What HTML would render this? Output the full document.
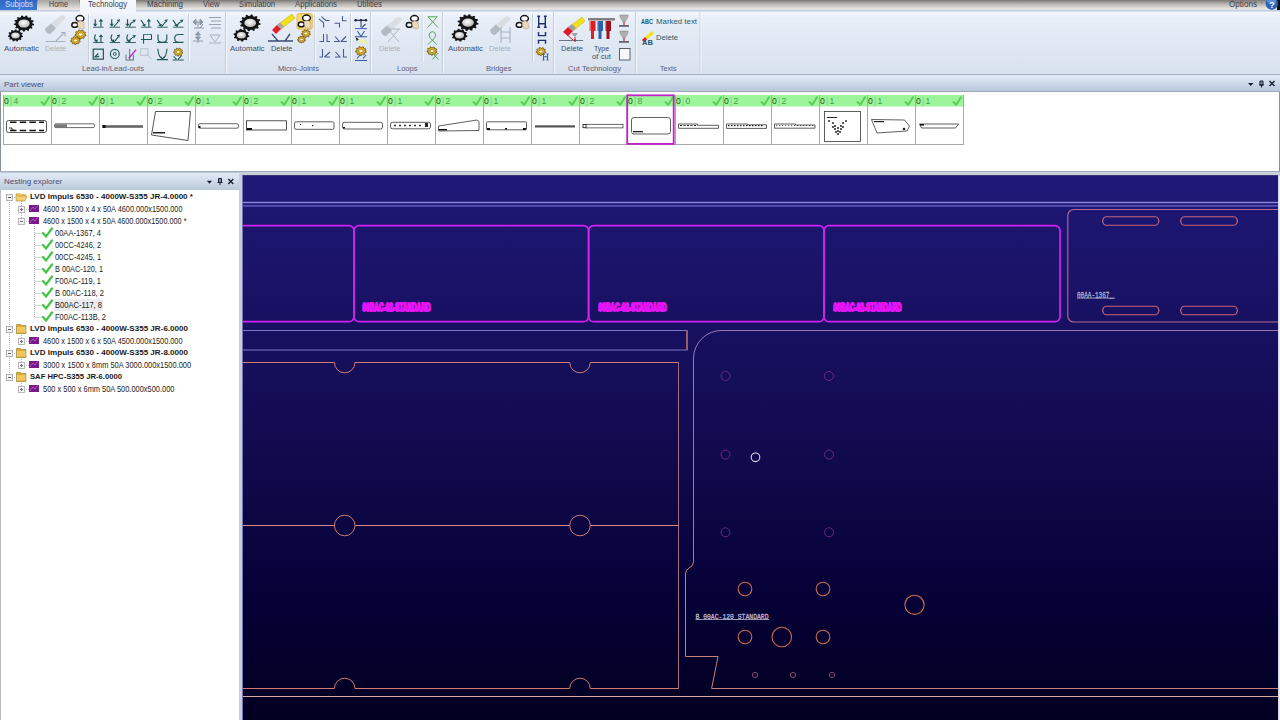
<!DOCTYPE html>
<html><head><meta charset="utf-8">
<style>
*{margin:0;padding:0;box-sizing:border-box}
html,body{width:1280px;height:720px;overflow:hidden;background:#c6d0dc;font-family:"Liberation Sans",sans-serif;position:relative}
.a{position:absolute}
#tabs{left:0;top:0;width:1280px;height:10px;background:linear-gradient(#7a7876,#b9b5b2 40%,#e8e6e4 90%,#dfe3ea)}
.tab{position:absolute;top:0.5px;font-size:8.2px;line-height:8px;color:#3a404c;white-space:nowrap;transform-origin:0 0}
#ribbon{left:0;top:10px;width:1280px;height:64px;background:linear-gradient(#c2cce0,#c2cce0 1px,#f2f6fc 2px,#e9eff9 8px,#e0e8f3 50%,#d8e2ee)}
#rline{left:0;top:74px;width:1280px;height:1px;background:#a4aec6}
#pvh{left:0;top:75px;width:1280px;height:17px;background:linear-gradient(#e2eaf8,#dce6f4 15%,#b6c6da)}
#pvhl{left:0;top:91px;width:1280px;height:1px;background:#9ea8b6}
#pv{left:0;top:92px;width:1280px;height:80px;background:#fff;border-left:1px solid #8a9098;border-right:1px solid #8a9098;border-bottom:1px solid #a2aab6}
#nvh{left:0;top:171px;width:239px;height:19px;background:linear-gradient(#a6aebb,#a6aebb 5%,#dfe8f6 12%,#d6e0ee 40%,#b9c9dc)}
#nv{left:0;top:190px;width:239px;height:530px;background:#fff;border-left:1px solid #bcbcbc}
#canvas{left:243px;top:176px;width:1035px;height:544px;background:linear-gradient(#1f1877,#110a4d 51%,#050136 78%,#020021)}
.gl{position:absolute;font-size:7px;color:#5a5870;white-space:nowrap}
.rt{position:absolute;transform-origin:0 0;line-height:10px;font-size:8px;color:#3c4a60;white-space:nowrap}
.rtd{color:#a8b0bc}
.sep{position:absolute;top:14px;width:1px;height:58px;background:#c4ccd8}
.tr{position:absolute;transform-origin:0 0;white-space:nowrap;color:#1c1c1c;line-height:12px;font-size:8px}
.tb{font-weight:bold;color:#1a1a1a}
.tn{font-size:8.8px}
.cl{position:absolute;top:95.5px;font-size:8.6px;line-height:10px;color:#4aa04a;white-space:nowrap}
.cl b{font-weight:normal;color:#205020}
.cl i{font-style:normal;color:#80c880;margin:0 1.2px}
</style></head><body>
<div id="tabs" class="a">
  <div class="a" style="left:0;top:0;width:37px;height:10px;background:linear-gradient(#2f66c4,#3c78d4)"></div>
  <div class="a" style="left:38px;top:0;width:41px;height:10px;background:linear-gradient(#a8a4a0,#ece8e4)"></div>
  <div class="a" style="left:80px;top:0;width:56px;height:11px;background:linear-gradient(#f6f8fb,#eef3fa)"></div>
  <div class="tab" style="left:5px;color:#d6e6ff;transform:scaleX(0.946)">Subjobs</div>
  <div class="tab" style="left:49px;transform:scaleX(0.870)">Home</div>
  <div class="tab" style="left:88px;transform:scaleX(0.942)">Technology</div>
  <div class="tab" style="left:147px;transform:scaleX(0.964)">Machining</div>
  <div class="tab" style="left:203px;transform:scaleX(0.937)">View</div>
  <div class="tab" style="left:239px;transform:scaleX(0.942)">Simulation</div>
  <div class="tab" style="left:295px;transform:scaleX(0.951)">Applications</div>
  <div class="tab" style="left:357px;transform:scaleX(0.947)">Utilities</div>
  <div class="tab" style="left:1229px;transform:scaleX(0.992)">Options</div>
</div>
<div id="ribbon" class="a"></div>
<div class="a" style="left:80px;top:9px;width:56px;height:3px;background:#f2f6fc"></div>
<svg class="a" style="left:1258px;top:0" width="22" height="12" viewBox="1258 0 22 12"><rect x="1277" y="0" width="3" height="10" fill="#101010"/><circle cx="1271.8" cy="3.5" r="6.2" fill="#2a64b8"/><ellipse cx="1271.5" cy="1" rx="4.5" ry="3" fill="#6a9ee0" opacity="0.7"/><text x="1269.2" y="7.5" font-family="Liberation Sans" font-weight="bold" font-size="9" fill="#fff">?</text><path d="M1260 2.5 h3 l-1.5 1.8z" fill="#8a8a8a"/></svg>
<!--RIBBON-->
<svg class="a" style="left:0;top:0" width="720" height="76" viewBox="0 0 720 76"><defs><radialGradient id="gg" cx="0.45" cy="0.4" r="0.6"><stop offset="0" stop-color="#ffffff"/><stop offset="1" stop-color="#b8b8b8"/></radialGradient></defs><polygon points="32.57,23.50 34.17,24.09 33.96,25.26 32.21,25.46 31.59,26.69 32.66,27.81 31.80,28.76 30.13,28.29 28.87,29.14 29.17,30.53 27.85,31.06 26.65,30.02 25.03,30.30 24.49,31.65 23.02,31.62 22.56,30.26 20.96,29.91 19.70,30.90 18.41,30.33 18.80,28.95 17.59,28.05 15.90,28.45 15.09,27.47 16.23,26.39 15.68,25.14 13.95,24.87 13.80,23.70 15.44,23.17 15.68,21.86 14.30,20.98 14.86,19.88 16.61,20.03 17.59,18.95 16.88,17.66 18.00,16.90 19.48,17.68 20.96,17.09 21.08,15.68 22.53,15.43 23.38,16.66 25.03,16.70 25.96,15.49 27.39,15.80 27.42,17.22 28.87,17.86 30.39,17.14 31.47,17.94 30.68,19.21 31.59,20.31 33.35,20.24 33.84,21.36 32.41,22.18" fill="#151515"/><ellipse cx="24" cy="23.5" rx="5.71" ry="4.08" fill="url(#gg)"/><polygon points="21.88,35.50 23.07,36.02 22.85,37.05 21.51,37.22 20.87,38.26 21.52,39.21 20.64,39.98 19.40,39.54 18.15,40.15 18.05,41.23 16.80,41.49 16.05,40.59 14.59,40.56 13.78,41.42 12.54,41.10 12.52,40.02 11.32,39.36 10.05,39.74 9.23,38.93 9.94,38.01 9.37,36.94 8.05,36.71 7.90,35.67 9.13,35.21 9.37,34.06 8.42,33.29 8.99,32.36 10.34,32.50 11.32,31.64 11.03,30.58 12.15,30.04 13.18,30.74 14.59,30.44 15.07,29.43 16.37,29.46 16.77,30.49 18.15,30.85 19.24,30.21 20.31,30.79 19.95,31.84 20.87,32.74 22.22,32.66 22.73,33.62 21.72,34.34" fill="#151515"/><ellipse cx="15.5" cy="35.5" rx="4.26" ry="3.04" fill="url(#gg)"/><path d="M45 29 L60 16 Q64 14 66 18 L50 34 Q46 34 45 29 Z" fill="#dadee3"/><path d="M45 29 L51 23.5 L56 28.5 L50 34 Q46 34 45 29 Z" fill="#b4bac2"/><path d="M45.5 41.5 h19.5 M56 41 l8.5 -8.5 M61 32.5 h4 v4" stroke="#a8b0bc" stroke-width="1.1" fill="none"/><ellipse cx="80" cy="18.6" rx="3.9" ry="3" fill="#fff" stroke="#151515" stroke-width="1.5"/><ellipse cx="74.8" cy="24.9" rx="3" ry="2.4" fill="#fff" stroke="#151515" stroke-width="1.5"/><path d="M77.5 21.8 q3.5 -1.5 6 0.2 l0.8 6 q-2.5 1.5 -5 0.5 l-1.5 -3 z" fill="#eed8bc" stroke="#9a8068" stroke-width="0.4"/><polygon points="84.79,34.50 85.97,34.99 85.67,36.10 84.36,36.10 83.79,36.84 84.32,37.86 83.25,38.55 82.24,37.83 81.24,38.09 80.88,39.16 79.54,39.10 79.32,38.01 78.36,37.66 77.27,38.28 76.29,37.51 76.94,36.54 76.47,35.75 75.16,35.63 75.00,34.50 76.23,34.12 76.47,33.25 75.56,32.45 76.29,31.49 77.52,31.88 78.36,31.34 78.26,30.23 79.54,29.90 80.20,30.86 81.24,30.91 82.02,30.01 83.25,30.45 83.02,31.55 83.79,32.16 85.06,31.89 85.67,32.90 84.66,33.62" fill="#e0b020" stroke="#5a4008" stroke-width="0.7"/><ellipse cx="80.5" cy="34.5" rx="2.20" ry="1.76" fill="#fff8c8" stroke="#806010" stroke-width="0.5"/><polygon points="79.24,40.50 80.27,40.93 80.01,41.90 78.87,41.90 78.37,42.55 78.83,43.43 77.90,44.03 77.02,43.41 76.15,43.63 75.83,44.57 74.67,44.52 74.47,43.56 73.63,43.26 72.68,43.80 71.82,43.12 72.40,42.28 71.98,41.59 70.84,41.49 70.70,40.50 71.78,40.17 71.98,39.41 71.19,38.71 71.82,37.88 72.90,38.21 73.63,37.74 73.55,36.77 74.67,36.48 75.24,37.33 76.15,37.37 76.82,36.58 77.90,36.97 77.70,37.93 78.37,38.45 79.48,38.22 80.01,39.10 79.13,39.73" fill="#e0b020" stroke="#5a4008" stroke-width="0.7"/><ellipse cx="75.5" cy="40.5" rx="1.92" ry="1.54" fill="#fff8c8" stroke="#806010" stroke-width="0.5"/><line x1="88.5" y1="14" x2="88.5" y2="62" stroke="#c6ced9" stroke-width="1"/><line x1="89.5" y1="14" x2="89.5" y2="62" stroke="#f6f9fd" stroke-width="1"/><g transform="translate(98.3 23) scale(0.88 0.76) translate(-98.3 -23)"><path d="M92.3 28.5 h12" stroke="#1f5858" stroke-width="1.2"/><path d="M94.8 18 v9" stroke="#1f5858" stroke-width="1.35"/><path d="M92.3 24 l2.5 3.5 l2.5 -3.5z" fill="#1f5858"/><path d="M101.3 28 v-8" stroke="#1f5858" stroke-width="1.35"/><path d="M98.8 21 l2.5 -3.5 l2.5 3.5z" fill="#1f5858"/></g><g transform="translate(114.8 23) scale(0.88 0.76) translate(-114.8 -23)"><path d="M108.8 28.5 h12" stroke="#1f5858" stroke-width="1.2"/><path d="M111.3 18 v9" stroke="#1f5858" stroke-width="1.35"/><path d="M108.8 24 l2.5 3.5 l2.5 -3.5z" fill="#1f5858"/><path d="M113.8 28 l5 -7" stroke="#1f5858" stroke-width="1.3"/><path d="M116.8 19 l4 -1 l-1 4z" fill="#1f5858"/></g><g transform="translate(130.6 23) scale(0.88 0.76) translate(-130.6 -23)"><path d="M124.6 28.5 h12" stroke="#1f5858" stroke-width="1.2"/><path d="M127.1 18 v9" stroke="#1f5858" stroke-width="1.35"/><path d="M124.6 24 l2.5 3.5 l2.5 -3.5z" fill="#1f5858"/><path d="M129.6 28 q0 -5 5 -7" stroke="#1f5858" stroke-width="1.3" fill="none"/><path d="M132.6 19 l4 -0.5 l-1.5 4z" fill="#1f5858"/></g><g transform="translate(146.2 23) scale(0.88 0.76) translate(-146.2 -23)"><path d="M140.2 28.5 h12" stroke="#1f5858" stroke-width="1.2"/><path d="M140.2 19 l4 7" stroke="#1f5858" stroke-width="1.35"/><path d="M141.2 26 l4 2 l0.5 -4z" fill="#1f5858"/><path d="M149.2 28 v-8" stroke="#1f5858" stroke-width="1.35"/><path d="M146.7 21 l2.5 -3.5 l2.5 3.5z" fill="#1f5858"/></g><g transform="translate(162.4 23) scale(0.88 0.76) translate(-162.4 -23)"><path d="M156.4 28.5 h12" stroke="#1f5858" stroke-width="1.2"/><path d="M156.4 19 l4 7" stroke="#1f5858" stroke-width="1.35"/><path d="M157.4 26 l4 2 l0.5 -4z" fill="#1f5858"/><path d="M161.4 28 l5 -7" stroke="#1f5858" stroke-width="1.3"/><path d="M164.4 19 l4 -1 l-1 4z" fill="#1f5858"/></g><g transform="translate(178.2 23) scale(0.88 0.76) translate(-178.2 -23)"><path d="M172.2 28.5 h12" stroke="#1f5858" stroke-width="1.2"/><path d="M172.2 19 l4 7" stroke="#1f5858" stroke-width="1.35"/><path d="M173.2 26 l4 2 l0.5 -4z" fill="#1f5858"/><path d="M177.2 28 q0 -5 5 -7" stroke="#1f5858" stroke-width="1.3" fill="none"/><path d="M180.2 19 l4 -0.5 l-1.5 4z" fill="#1f5858"/></g><g transform="translate(98.3 38.4) scale(0.88 0.76) translate(-98.3 -38.4)"><path d="M92.3 43.9 h12" stroke="#1f5858" stroke-width="1.2"/><path d="M95.3 33.4 q-3 5 1 9" stroke="#1f5858" stroke-width="1.35" fill="none"/><path d="M93.3 41.4 l4 2 l0.5 -4z" fill="#1f5858"/><path d="M101.3 43.4 v-8" stroke="#1f5858" stroke-width="1.35"/><path d="M98.8 36.4 l2.5 -3.5 l2.5 3.5z" fill="#1f5858"/></g><g transform="translate(114.8 38.4) scale(0.88 0.76) translate(-114.8 -38.4)"><path d="M108.8 43.9 h12" stroke="#1f5858" stroke-width="1.2"/><path d="M111.8 33.4 q-3 5 1 9" stroke="#1f5858" stroke-width="1.35" fill="none"/><path d="M109.8 41.4 l4 2 l0.5 -4z" fill="#1f5858"/><path d="M113.8 43.4 l5 -7" stroke="#1f5858" stroke-width="1.3"/><path d="M116.8 34.4 l4 -1 l-1 4z" fill="#1f5858"/></g><g transform="translate(130.6 38.4) scale(0.88 0.76) translate(-130.6 -38.4)"><path d="M124.6 43.9 h12" stroke="#1f5858" stroke-width="1.2"/><path d="M127.6 33.4 q-3 5 1 9" stroke="#1f5858" stroke-width="1.35" fill="none"/><path d="M125.6 41.4 l4 2 l0.5 -4z" fill="#1f5858"/><path d="M129.6 43.4 q0 -5 5 -7" stroke="#1f5858" stroke-width="1.3" fill="none"/><path d="M132.6 34.4 l4 -0.5 l-1.5 4z" fill="#1f5858"/></g><g transform="translate(146.2 38.4) scale(0.88 0.76) translate(-146.2 -38.4)"><path d="M140.2 39.9 h12 M143.2 45.4 V33.4 H152.2 V39.9" stroke="#1f5858" stroke-width="1.2" fill="none"/></g><g transform="translate(162.4 38.4) scale(0.88 0.76) translate(-162.4 -38.4)"><path d="M157.4 33.4 v5 q0 5 5 5 q5 0 5 -5 v-5 M156.4 43.9 h12" stroke="#1f5858" stroke-width="1.3" fill="none"/></g><g transform="translate(178.2 38.4) scale(0.88 0.76) translate(-178.2 -38.4)"><path d="M184.2 33.4 h-5 q-5 0 -5 5 q0 5 5 5 h5 M172.2 43.9 h12" stroke="#1f5858" stroke-width="1.3" fill="none"/></g><g transform="translate(98.3 54.4) scale(0.92 0.95) translate(-98.3 -54.4)"><rect x="92.8" y="48.9" width="11" height="10.5" fill="none" stroke="#1f5858" stroke-width="1.3"/><path d="M94.3 57.4 l4 -4 M94.3 57.4 l5 -1" stroke="#1f5858" stroke-width="1.3"/></g><g transform="translate(114.8 54.4) scale(0.92 0.95) translate(-114.8 -54.4)"><circle cx="114.8" cy="53.9" r="4.8" fill="none" stroke="#1f5858" stroke-width="1.2"/><circle cx="114.8" cy="53.9" r="1.6" fill="none" stroke="#1f5858" stroke-width="1"/></g><g transform="translate(130.6 54.4) scale(0.92 0.95) translate(-130.6 -54.4)"><path d="M125.6 54.4 v6 h8 v-6 M129.6 48.4 v12" stroke="#5a7a80" stroke-width="1.1" fill="none"/><path d="M128.6 58.4 l8 -9" stroke="#c020d0" stroke-width="1.4"/></g><g transform="translate(146.2 54.4) scale(0.92 0.95) translate(-146.2 -54.4)"><rect x="140.2" y="48.4" width="8" height="7" fill="none" stroke="#b8c0c8" stroke-width="1"/><path d="M147.2 54.4 l5 5" stroke="#b8c0c8" stroke-width="1"/></g><g transform="translate(162.4 54.4) scale(0.92 0.95) translate(-162.4 -54.4)"><path d="M157.4 48.4 q1 10 5 10 q4 0 5 -10 M156.4 59.9 h12" stroke="#1f5858" stroke-width="1.2" fill="none"/><path d="M160.4 56.4 l2 3 l2 -3" stroke="#1f5858" stroke-width="1" fill="none"/></g><g transform="translate(178.2 54.4) scale(0.92 0.95) translate(-178.2 -54.4)"><polygon points="182.10,51.90 183.17,52.34 182.90,53.35 181.71,53.35 181.19,54.03 181.67,54.96 180.70,55.58 179.79,54.93 178.88,55.16 178.55,56.14 177.33,56.09 177.13,55.09 176.25,54.77 175.26,55.34 174.37,54.63 174.97,53.75 174.54,53.03 173.35,52.93 173.20,51.90 174.32,51.55 174.54,50.77 173.71,50.04 174.37,49.17 175.49,49.52 176.25,49.03 176.17,48.02 177.33,47.71 177.93,48.59 178.88,48.64 179.58,47.81 180.70,48.22 180.49,49.22 181.19,49.77 182.35,49.52 182.90,50.45 181.98,51.10" fill="#e0b020" stroke="#5a4008" stroke-width="0.7"/><ellipse cx="178.2" cy="51.9" rx="2.00" ry="1.60" fill="#fff8c8" stroke="#806010" stroke-width="0.5"/><path d="M173.2 56.4 l3 3 M178.2 59.4 l4 -4 M172.2 60.4 h12" stroke="#1f5858" stroke-width="1.1"/></g><line x1="188.5" y1="14" x2="188.5" y2="62" stroke="#c6ced9" stroke-width="1"/><line x1="189.5" y1="14" x2="189.5" y2="62" stroke="#f6f9fd" stroke-width="1"/><path d="M193 22 l3 -3 v6 z M203 22 l-3 -3 v6 z M196 22 h4 M198 22 v6 M194 28 h10 M200 28 l3 -4" stroke="#8a98a8" fill="#8a98a8" stroke-width="1"/><path d="M209 17.5 h12 M211 21 h10 M209 24.5 h12 M211 28 h10" stroke="#98a4b0" stroke-width="1.1"/><path d="M198 31 v12 M195.5 35 l2.5 -3 l2.5 3z M195.5 37 l2.5 3 l2.5 -3z M193 41 h10" stroke="#8a98a8" fill="#8a98a8" stroke-width="0.9"/><path d="M209 43 h12 M210 35 l5 7 l5 -7 h-10" stroke="#a8b2bc" stroke-width="1" fill="none"/><line x1="225.5" y1="12" x2="225.5" y2="73" stroke="#c4ccd8" stroke-width="1"/><line x1="226.5" y1="12" x2="226.5" y2="73" stroke="#f4f7fb" stroke-width="1"/><polygon points="259.02,22.90 260.67,23.56 260.41,24.86 258.59,25.08 257.84,26.43 258.85,27.66 257.82,28.68 256.10,28.14 254.61,29.01 254.72,30.48 253.18,30.95 252.03,29.80 250.20,29.96 249.38,31.27 247.75,31.07 247.47,29.61 245.79,29.01 244.25,29.82 242.97,28.99 243.65,27.62 242.56,26.43 240.72,26.52 240.13,25.29 241.57,24.37 241.38,22.90 239.73,22.24 239.99,20.94 241.81,20.72 242.56,19.37 241.55,18.14 242.58,17.12 244.30,17.66 245.79,16.79 245.68,15.32 247.22,14.85 248.37,16.00 250.20,15.84 251.02,14.53 252.65,14.73 252.93,16.19 254.61,16.79 256.15,15.98 257.43,16.81 256.75,18.18 257.84,19.37 259.68,19.28 260.27,20.51 258.83,21.43" fill="#151515"/><ellipse cx="250.2" cy="22.9" rx="5.88" ry="4.20" fill="url(#gg)"/><polygon points="248.12,35.20 249.36,35.80 249.08,36.99 247.65,37.18 246.84,38.36 247.40,39.43 246.30,40.26 245.00,39.74 243.48,40.31 243.15,41.45 241.65,41.60 240.98,40.57 239.32,40.31 238.22,41.07 236.90,40.49 237.12,39.34 235.96,38.36 234.51,38.46 233.87,37.37 234.89,36.54 234.68,35.20 233.44,34.60 233.72,33.41 235.15,33.22 235.96,32.04 235.40,30.97 236.50,30.14 237.80,30.66 239.32,30.09 239.65,28.95 241.15,28.80 241.82,29.83 243.48,30.09 244.58,29.33 245.90,29.91 245.68,31.06 246.84,32.04 248.29,31.94 248.93,33.03 247.91,33.86" fill="#151515"/><ellipse cx="241.4" cy="35.2" rx="4.48" ry="3.20" fill="url(#gg)"/><path d="M276 26 L292 14 L295 18 L280 30 Z" fill="#f2e21c" stroke="#c8b010" stroke-width="0.6"/><path d="M272 30 L277 25 L281 29 L276 34 Z" fill="#e02030"/><path d="M277 25 L280 22.5 L284 26.5 L281 29Z" fill="#a8a8a8"/><path d="M268 41 h15 M278 41 l-6 -7 M283 41 h10 M285 41 l5 -7" stroke="#3a4a78" stroke-width="1.3" fill="none"/><rect x="297" y="13.5" width="15.3" height="15.8" rx="2" fill="#f8d870" stroke="#e0b040" stroke-width="0.8"/><ellipse cx="306.5" cy="18.1" rx="3.9" ry="3" fill="#fff" stroke="#151515" stroke-width="1.5"/><ellipse cx="301.3" cy="24.4" rx="3" ry="2.4" fill="#fff" stroke="#151515" stroke-width="1.5"/><path d="M304.0 21.3 q3.5 -1.5 6 0.2 l0.8 6 q-2.5 1.5 -5 0.5 l-1.5 -3 z" fill="#eed8bc" stroke="#9a8068" stroke-width="0.4"/><polygon points="309.51,33.50 310.48,33.90 310.23,34.81 309.15,34.81 308.69,35.42 309.13,36.25 308.25,36.81 307.43,36.23 306.61,36.44 306.31,37.32 305.22,37.27 305.03,36.37 304.25,36.08 303.35,36.59 302.55,35.96 303.09,35.17 302.70,34.52 301.63,34.43 301.50,33.50 302.51,33.19 302.70,32.48 301.96,31.82 302.55,31.04 303.56,31.35 304.25,30.92 304.17,30.01 305.22,29.73 305.76,30.52 306.61,30.56 307.24,29.82 308.25,30.19 308.06,31.09 308.69,31.58 309.73,31.36 310.23,32.19 309.41,32.78" fill="#e0b020" stroke="#5a4008" stroke-width="0.7"/><ellipse cx="306" cy="33.5" rx="1.80" ry="1.44" fill="#fff8c8" stroke="#806010" stroke-width="0.5"/><polygon points="304.62,39.50 305.48,39.86 305.26,40.66 304.30,40.66 303.89,41.20 304.28,41.95 303.50,42.44 302.77,41.92 302.04,42.11 301.78,42.89 300.81,42.85 300.64,42.05 299.94,41.80 299.15,42.25 298.44,41.69 298.91,40.98 298.57,40.41 297.62,40.32 297.50,39.50 298.40,39.22 298.57,38.59 297.90,38.01 298.44,37.31 299.33,37.59 299.94,37.20 299.87,36.39 300.81,36.15 301.28,36.85 302.04,36.89 302.60,36.23 303.50,36.56 303.33,37.35 303.89,37.80 304.82,37.60 305.26,38.34 304.53,38.86" fill="#e0b020" stroke="#5a4008" stroke-width="0.7"/><ellipse cx="301.5" cy="39.5" rx="1.60" ry="1.28" fill="#fff8c8" stroke="#806010" stroke-width="0.5"/><line x1="314.7" y1="14" x2="314.7" y2="62" stroke="#c6ced9" stroke-width="1"/><line x1="315.7" y1="14" x2="315.7" y2="62" stroke="#f6f9fd" stroke-width="1"/><g stroke="#4a5a98" stroke-width="1.1" fill="none"><path d="M318.9 18.9 L323.6 22.8 V27.5 M321.4 16.7 L325.7 20.5 H329.7"/><path d="M342.5 16 V20.7 H346.5 M334.5 23.3 H339.5 V27.5"/><path d="M319.5 41.5 H323.5 V34 M327 34 V41.5 H330"/><path d="M334 41.5 H339.5 L335 36.5 M341 41.5 L346 36.5 M341 41.5 H347"/><path d="M319.5 57 H322.5 V49 M324.5 57 L330 52 M324.5 57 H330"/><path d="M335.5 52 L340 57 H335 M343.5 49 V57 H347"/></g><line x1="350.5" y1="14" x2="350.5" y2="62" stroke="#c6ced9" stroke-width="1"/><line x1="351.5" y1="14" x2="351.5" y2="62" stroke="#f6f9fd" stroke-width="1"/><path d="M355 20.3 H366.5" stroke="#1a2038" stroke-width="1.2"/><circle cx="355.6" cy="20.3" r="1.2" fill="#1a2038"/><circle cx="361" cy="20.3" r="1.2" fill="#1a2038"/><circle cx="366" cy="20.3" r="1.2" fill="#1a2038"/><path d="M361 20.3 V27.5 M362 27.5 L365.5 24" stroke="#3a4a80" stroke-width="1.1" fill="none"/><path d="M355 28.6 H367" stroke="#4a6ab8" stroke-width="1.1"/><path d="M357.5 31 L361 36.5 L364.5 31 M355 36.8 H367" stroke="#3a5aa8" stroke-width="1.1" fill="none"/><path d="M355.5 37 l3.5 2.5 l-1.5 0.5 l-0.5 1.5z" fill="#101010"/><rect x="358.5" y="39.5" width="9" height="4" fill="#e8f0a0" opacity="0.7"/><polygon points="365.13,51.00 366.27,51.47 365.98,52.54 364.72,52.54 364.17,53.26 364.68,54.24 363.65,54.90 362.68,54.21 361.72,54.46 361.37,55.49 360.08,55.44 359.86,54.38 358.93,54.04 357.88,54.64 356.94,53.90 357.57,52.96 357.12,52.20 355.86,52.09 355.70,51.00 356.89,50.63 357.12,49.80 356.24,49.03 356.94,48.10 358.13,48.47 358.93,47.96 358.84,46.88 360.08,46.56 360.71,47.49 361.72,47.54 362.46,46.67 363.65,47.10 363.43,48.16 364.17,48.74 365.39,48.48 365.98,49.46 365.01,50.15" fill="#e0b020" stroke="#5a4008" stroke-width="0.7"/><ellipse cx="361" cy="51" rx="2.12" ry="1.70" fill="#fff8c8" stroke="#806010" stroke-width="0.5"/><path d="M357 58.5 L360 55 M363 58.5 L366 55 M355 60.5 H367" stroke="#3a5aa8" stroke-width="1.1" fill="none"/><line x1="370.5" y1="12" x2="370.5" y2="73" stroke="#c4ccd8" stroke-width="1"/><line x1="371.5" y1="12" x2="371.5" y2="73" stroke="#f4f7fb" stroke-width="1"/><path d="M381 31 L396 18 Q400 16 402 20 L386 36 Q382 36 381 31 Z" fill="#dadee3"/><path d="M381 31 L387 25.5 L392 30.5 L386 36 Q382 36 381 31 Z" fill="#b4bac2"/><path d="M388 42 l11 -13 M388 29 l11 13 M386 29 h14" stroke="#b0b8c0" stroke-width="1" fill="none"/><ellipse cx="414.5" cy="18.6" rx="3.9" ry="3" fill="#fff" stroke="#151515" stroke-width="1.5"/><ellipse cx="409.3" cy="24.9" rx="3" ry="2.4" fill="#fff" stroke="#151515" stroke-width="1.5"/><path d="M412.0 21.8 q3.5 -1.5 6 0.2 l0.8 6 q-2.5 1.5 -5 0.5 l-1.5 -3 z" fill="#eed8bc" stroke="#9a8068" stroke-width="0.4"/><line x1="422.2" y1="14" x2="422.2" y2="62" stroke="#c6ced9" stroke-width="1"/><line x1="423.2" y1="14" x2="423.2" y2="62" stroke="#f6f9fd" stroke-width="1"/><path d="M428 16.8 H437 M427.8 16.5 L438 27.5 M437.5 16.5 L427.5 27.5" stroke="#58a858" stroke-width="1" fill="none"/><path d="M428 44.5 L434.5 38 Q437 35 434.5 32.5 Q432.5 30.8 430.2 32.5 Q427.8 35 430.2 38 L436.8 44.5" stroke="#58a858" stroke-width="1" fill="none"/><polygon points="435.90,51.00 436.97,51.44 436.70,52.45 435.51,52.45 434.99,53.13 435.47,54.06 434.50,54.68 433.59,54.03 432.68,54.26 432.35,55.24 431.13,55.19 430.93,54.19 430.05,53.87 429.06,54.44 428.17,53.73 428.77,52.85 428.34,52.13 427.15,52.03 427.00,51.00 428.12,50.65 428.34,49.87 427.51,49.14 428.17,48.27 429.29,48.62 430.05,48.13 429.97,47.12 431.13,46.81 431.73,47.69 432.68,47.74 433.38,46.91 434.50,47.32 434.29,48.32 434.99,48.87 436.15,48.62 436.70,49.55 435.78,50.20" fill="#e0b020" stroke="#5a4008" stroke-width="0.7"/><ellipse cx="432" cy="51" rx="2.00" ry="1.60" fill="#fff8c8" stroke="#806010" stroke-width="0.5"/><path d="M432.5 53 L438.5 59.5 M438.3 53 L432.3 59.5" stroke="#58a858" stroke-width="1" fill="none"/><line x1="442.5" y1="12" x2="442.5" y2="73" stroke="#c4ccd8" stroke-width="1"/><line x1="443.5" y1="12" x2="443.5" y2="73" stroke="#f4f7fb" stroke-width="1"/><polygon points="476.82,22.60 478.47,23.26 478.21,24.56 476.39,24.78 475.64,26.13 476.65,27.36 475.62,28.38 473.90,27.84 472.41,28.71 472.52,30.18 470.98,30.65 469.83,29.50 468.00,29.66 467.18,30.97 465.55,30.77 465.27,29.31 463.59,28.71 462.05,29.52 460.77,28.69 461.45,27.32 460.36,26.13 458.52,26.22 457.93,24.99 459.37,24.07 459.18,22.60 457.53,21.94 457.79,20.64 459.61,20.42 460.36,19.07 459.35,17.84 460.38,16.82 462.10,17.36 463.59,16.49 463.48,15.02 465.02,14.55 466.17,15.70 468.00,15.54 468.82,14.23 470.45,14.43 470.73,15.89 472.41,16.49 473.95,15.68 475.23,16.51 474.55,17.88 475.64,19.07 477.48,18.98 478.07,20.21 476.63,21.13" fill="#151515"/><ellipse cx="468" cy="22.6" rx="5.88" ry="4.20" fill="url(#gg)"/><polygon points="466.22,35.20 467.46,35.80 467.18,36.99 465.75,37.18 464.94,38.36 465.50,39.43 464.40,40.26 463.10,39.74 461.58,40.31 461.25,41.45 459.75,41.60 459.08,40.57 457.42,40.31 456.32,41.07 455.00,40.49 455.22,39.34 454.06,38.36 452.61,38.46 451.97,37.37 452.99,36.54 452.78,35.20 451.54,34.60 451.82,33.41 453.25,33.22 454.06,32.04 453.50,30.97 454.60,30.14 455.90,30.66 457.42,30.09 457.75,28.95 459.25,28.80 459.92,29.83 461.58,30.09 462.68,29.33 464.00,29.91 463.78,31.06 464.94,32.04 466.39,31.94 467.03,33.03 466.01,33.86" fill="#151515"/><ellipse cx="459.5" cy="35.2" rx="4.48" ry="3.20" fill="url(#gg)"/><path d="M490 30 L505 17 Q509 15 511 19 L495 35 Q491 35 490 30 Z" fill="#dadee3"/><path d="M490 30 L496 24.5 L501 29.5 L495 35 Q491 35 490 30 Z" fill="#b4bac2"/><path d="M501 27 v16 M510 27 v16 M501 32 h9 M501 38 h9" stroke="#a8b2c0" stroke-width="1.1" fill="none"/><ellipse cx="524.5" cy="18.6" rx="3.9" ry="3" fill="#fff" stroke="#151515" stroke-width="1.5"/><ellipse cx="519.3" cy="24.9" rx="3" ry="2.4" fill="#fff" stroke="#151515" stroke-width="1.5"/><path d="M522.0 21.8 q3.5 -1.5 6 0.2 l0.8 6 q-2.5 1.5 -5 0.5 l-1.5 -3 z" fill="#eed8bc" stroke="#9a8068" stroke-width="0.4"/><line x1="532.5" y1="14" x2="532.5" y2="62" stroke="#c6ced9" stroke-width="1"/><line x1="533.5" y1="14" x2="533.5" y2="62" stroke="#f6f9fd" stroke-width="1"/><path d="M538.7 16 v11.5 M545.3 16 v11.5 M538.7 23.8 h6.6 M537.3 16.2 h2.8 M543.9 16.2 h2.8 M537.3 27.3 h2.8 M543.9 27.3 h2.8" stroke="#1a3070" stroke-width="1.4" fill="none"/><path d="M538.5 32 v3.6 h7 v-3.6 M538.5 43.8 v-3.4 h7 v3.4" stroke="#1a3070" stroke-width="1.4" fill="none"/><polygon points="544.74,51.50 545.77,51.93 545.51,52.90 544.37,52.90 543.87,53.55 544.33,54.43 543.40,55.03 542.52,54.41 541.65,54.63 541.33,55.57 540.17,55.52 539.97,54.56 539.13,54.26 538.18,54.80 537.32,54.12 537.90,53.28 537.48,52.59 536.34,52.49 536.20,51.50 537.28,51.17 537.48,50.41 536.69,49.71 537.32,48.88 538.40,49.21 539.13,48.74 539.05,47.77 540.17,47.48 540.74,48.33 541.65,48.37 542.32,47.58 543.40,47.97 543.20,48.93 543.87,49.45 544.98,49.22 545.51,50.10 544.63,50.73" fill="#e0b020" stroke="#5a4008" stroke-width="0.7"/><ellipse cx="541" cy="51.5" rx="1.92" ry="1.54" fill="#fff8c8" stroke="#806010" stroke-width="0.5"/><path d="M543.5 54 v6 M547.5 54 v6 M543.5 56.8 h4 M542.5 54 h2 M546.5 54 h2 M542.5 60 h2 M546.5 60 h2" stroke="#3a5aa0" stroke-width="1" fill="none"/><line x1="553.5" y1="12" x2="553.5" y2="73" stroke="#c4ccd8" stroke-width="1"/><line x1="554.5" y1="12" x2="554.5" y2="73" stroke="#f4f7fb" stroke-width="1"/><path d="M569 27 L582 17 L585 21 L573 31 Z" fill="#f2e21c" stroke="#c8b010" stroke-width="0.5"/><path d="M563 32 L568 27 L573 31 L568 36 Z" fill="#e01828"/><path d="M568 27 L572 24 L576 28 L573 31Z" fill="#a0a0a0"/><path d="M571 33 h7 l-3 4 z" fill="#a0a0a0"/><path d="M564 32 l9 8 M575 37 v3" stroke="#e02030" stroke-width="1"/><circle cx="575" cy="40.5" r="1.3" fill="#e02030"/><path d="M559 40.5 h24" stroke="#505868" stroke-width="0.8"/><rect x="588" y="18" width="27" height="2.5" fill="#808080"/><rect x="589.5" y="21" width="6" height="10" fill="#e02020"/><rect x="589.5" y="21" width="1.2" height="10" fill="#fff" opacity="0.5"/><rect x="591.0" y="31" width="3" height="8" fill="#e02020"/><rect x="597" y="21" width="6" height="10" fill="#2a60b0"/><rect x="597" y="21" width="1.2" height="10" fill="#fff" opacity="0.5"/><rect x="598.5" y="31" width="3" height="8" fill="#2a60b0"/><rect x="605" y="21" width="6" height="10" fill="#a01020"/><rect x="605" y="21" width="1.2" height="10" fill="#fff" opacity="0.5"/><rect x="606.5" y="31" width="3" height="8" fill="#a01020"/><path d="M620 15 h8 v2 l-3 5 h-2 l-3 -5z" fill="#b0b0b0" stroke="#808080" stroke-width="0.5"/><path d="M624 22 v3" stroke="#d02030" stroke-width="1.2"/><rect x="619" y="25" width="10" height="1.8" fill="#606870"/><path d="M620 31 h8 v2 l-3 5 h-2 l-3 -5z" fill="#b0b0b0" stroke="#808080" stroke-width="0.5"/><path d="M624 38 v3" stroke="#d02030" stroke-width="1.2"/><rect x="619" y="41" width="10" height="1.8" fill="#606870"/><rect x="619.5" y="48.5" width="10.5" height="11.5" fill="#f6f8fb" stroke="#586070" stroke-width="1"/><line x1="635.5" y1="12" x2="635.5" y2="73" stroke="#c4ccd8" stroke-width="1"/><line x1="636.5" y1="12" x2="636.5" y2="73" stroke="#f4f7fb" stroke-width="1"/><path d="M645 37 L652 31 L654 33.5 L647 39.5 Z" fill="#f2e21c"/><path d="M642 40 L645 37 L647 39.5 L644 42.5 Z" fill="#e01828"/><line x1="700" y1="12" x2="700" y2="73" stroke="#c4ccd8" stroke-width="1"/><line x1="701" y1="12" x2="701" y2="73" stroke="#f4f7fb" stroke-width="1"/></svg>
<div class="rt" style="left:4px;top:44px;color:#3e4c66;font-size:8px;transform:scaleX(0.984)">Automatic</div>
<div class="rt" style="left:45px;top:44px;color:#aab2be;font-size:8px;transform:scaleX(0.908)">Delete</div>
<div class="rt" style="left:82.0px;top:64px;color:#5e5a7a;font-size:8px;transform:scaleX(0.961)">Lead-in/Lead-outs</div>
<div class="rt" style="left:230px;top:44px;color:#3e4c66;font-size:8px;transform:scaleX(0.970)">Automatic</div>
<div class="rt" style="left:271px;top:44px;color:#3e4c66;font-size:8px;transform:scaleX(0.930)">Delete</div>
<div class="rt" style="left:278.0px;top:64px;color:#5e5a7a;font-size:8px;transform:scaleX(0.951)">Micro-Joints</div>
<div class="rt" style="left:379px;top:44px;color:#aab2be;font-size:8px;transform:scaleX(0.930)">Delete</div>
<div class="rt" style="left:397.25px;top:64px;color:#5e5a7a;font-size:8px;transform:scaleX(0.941)">Loops</div>
<div class="rt" style="left:448px;top:44px;color:#3e4c66;font-size:8px;transform:scaleX(0.984)">Automatic</div>
<div class="rt" style="left:489px;top:44px;color:#aab2be;font-size:8px;transform:scaleX(0.951)">Delete</div>
<div class="rt" style="left:485.75px;top:64px;color:#5e5a7a;font-size:8px;transform:scaleX(0.940)">Bridges</div>
<div class="rt" style="left:560.5px;top:44px;color:#3e4c66;font-size:8px;transform:scaleX(0.951)">Delete</div>
<div class="rt" style="left:594px;top:44px;color:#3e4c66;font-size:8px;transform:scaleX(0.865)">Type</div>
<div class="rt" style="left:592px;top:52px;color:#3e4c66;font-size:8px;transform:scaleX(0.970)">of cut</div>
<div class="rt" style="left:568.0px;top:64px;color:#5e5a7a;font-size:8px;transform:scaleX(0.964)">Cut Technology</div>
<div class="rt" style="left:641px;top:16.5px;color:#1f5a68;font-size:7px;font-weight:bold;transform:scaleX(0.791)">ABC</div>
<div class="rt" style="left:656px;top:16.5px;color:#2a5a6a;font-size:8px;transform:scaleX(0.981)">Marked text</div>
<div class="rt" style="left:641.5px;top:37.5px;color:#1f5a68;font-size:7px;font-weight:bold;transform:scaleX(1.086)">AB</div>
<div class="rt" style="left:656px;top:32.5px;color:#2a5a6a;font-size:8px;transform:scaleX(0.951)">Delete</div>
<div class="rt" style="left:659.75px;top:64px;color:#5e5a7a;font-size:8px;transform:scaleX(0.884)">Texts</div>
<!--/RIBBON-->
<div id="rline" class="a"></div>
<div id="pvh" class="a"><div class="a" style="left:4px;top:4.5px;font-size:8px;color:#4a4e78">Part viewer</div></div>
<div id="pvhl" class="a"></div>
<svg class="a" style="left:1240px;top:78px" width="40" height="12" viewBox="1240 78 40 12"><path d="M1248 83 h5.5 l-2.75 3z" fill="#1a2030"/><path d="M1260 81 h3 v4 h-3z M1259 85 h5 M1261.5 85 v2.5" stroke="#1a2030" stroke-width="1" fill="#8090a8"/><path d="M1269.5 81 l5 5 M1274.5 81 l-5 5" stroke="#1a2030" stroke-width="1.4"/></svg>
<div id="pv" class="a"></div>
<div id="cells">
<svg class="a" style="left:0;top:92px" width="970" height="60" viewBox="0 92 970 60"><rect x="3" y="95" width="960" height="11.5" fill="#9cf59a"/><g stroke="#a8a8a8" stroke-width="1"><line x1="3.5" y1="95" x2="3.5" y2="145"/><line x1="51.5" y1="95" x2="51.5" y2="145"/><line x1="99.5" y1="95" x2="99.5" y2="145"/><line x1="147.5" y1="95" x2="147.5" y2="145"/><line x1="195.5" y1="95" x2="195.5" y2="145"/><line x1="243.5" y1="95" x2="243.5" y2="145"/><line x1="291.5" y1="95" x2="291.5" y2="145"/><line x1="339.5" y1="95" x2="339.5" y2="145"/><line x1="387.5" y1="95" x2="387.5" y2="145"/><line x1="435.5" y1="95" x2="435.5" y2="145"/><line x1="483.5" y1="95" x2="483.5" y2="145"/><line x1="531.5" y1="95" x2="531.5" y2="145"/><line x1="579.5" y1="95" x2="579.5" y2="145"/><line x1="627.5" y1="95" x2="627.5" y2="145"/><line x1="675.5" y1="95" x2="675.5" y2="145"/><line x1="723.5" y1="95" x2="723.5" y2="145"/><line x1="771.5" y1="95" x2="771.5" y2="145"/><line x1="819.5" y1="95" x2="819.5" y2="145"/><line x1="867.5" y1="95" x2="867.5" y2="145"/><line x1="915.5" y1="95" x2="915.5" y2="145"/><line x1="963.5" y1="95" x2="963.5" y2="145"/><line x1="3" y1="144.5" x2="963" y2="144.5"/></g><path d="M41.5 102 l2.8 2.8 l4.7 -7.5" stroke="#5ccc5c" stroke-width="2" fill="none" stroke-linecap="round" stroke-linejoin="round"/><path d="M89.5 102 l2.8 2.8 l4.7 -7.5" stroke="#5ccc5c" stroke-width="2" fill="none" stroke-linecap="round" stroke-linejoin="round"/><path d="M137.5 102 l2.8 2.8 l4.7 -7.5" stroke="#5ccc5c" stroke-width="2" fill="none" stroke-linecap="round" stroke-linejoin="round"/><path d="M185.5 102 l2.8 2.8 l4.7 -7.5" stroke="#5ccc5c" stroke-width="2" fill="none" stroke-linecap="round" stroke-linejoin="round"/><path d="M233.5 102 l2.8 2.8 l4.7 -7.5" stroke="#5ccc5c" stroke-width="2" fill="none" stroke-linecap="round" stroke-linejoin="round"/><path d="M281.5 102 l2.8 2.8 l4.7 -7.5" stroke="#5ccc5c" stroke-width="2" fill="none" stroke-linecap="round" stroke-linejoin="round"/><path d="M329.5 102 l2.8 2.8 l4.7 -7.5" stroke="#5ccc5c" stroke-width="2" fill="none" stroke-linecap="round" stroke-linejoin="round"/><path d="M377.5 102 l2.8 2.8 l4.7 -7.5" stroke="#5ccc5c" stroke-width="2" fill="none" stroke-linecap="round" stroke-linejoin="round"/><path d="M425.5 102 l2.8 2.8 l4.7 -7.5" stroke="#5ccc5c" stroke-width="2" fill="none" stroke-linecap="round" stroke-linejoin="round"/><path d="M473.5 102 l2.8 2.8 l4.7 -7.5" stroke="#5ccc5c" stroke-width="2" fill="none" stroke-linecap="round" stroke-linejoin="round"/><path d="M521.5 102 l2.8 2.8 l4.7 -7.5" stroke="#5ccc5c" stroke-width="2" fill="none" stroke-linecap="round" stroke-linejoin="round"/><path d="M569.5 102 l2.8 2.8 l4.7 -7.5" stroke="#5ccc5c" stroke-width="2" fill="none" stroke-linecap="round" stroke-linejoin="round"/><path d="M617.5 102 l2.8 2.8 l4.7 -7.5" stroke="#5ccc5c" stroke-width="2" fill="none" stroke-linecap="round" stroke-linejoin="round"/><path d="M665.5 102 l2.8 2.8 l4.7 -7.5" stroke="#5ccc5c" stroke-width="2" fill="none" stroke-linecap="round" stroke-linejoin="round"/><path d="M713.5 102 l2.8 2.8 l4.7 -7.5" stroke="#5ccc5c" stroke-width="2" fill="none" stroke-linecap="round" stroke-linejoin="round"/><path d="M761.5 102 l2.8 2.8 l4.7 -7.5" stroke="#5ccc5c" stroke-width="2" fill="none" stroke-linecap="round" stroke-linejoin="round"/><path d="M809.5 102 l2.8 2.8 l4.7 -7.5" stroke="#5ccc5c" stroke-width="2" fill="none" stroke-linecap="round" stroke-linejoin="round"/><path d="M857.5 102 l2.8 2.8 l4.7 -7.5" stroke="#5ccc5c" stroke-width="2" fill="none" stroke-linecap="round" stroke-linejoin="round"/><path d="M905.5 102 l2.8 2.8 l4.7 -7.5" stroke="#5ccc5c" stroke-width="2" fill="none" stroke-linecap="round" stroke-linejoin="round"/><path d="M953.5 102 l2.8 2.8 l4.7 -7.5" stroke="#5ccc5c" stroke-width="2" fill="none" stroke-linecap="round" stroke-linejoin="round"/><rect x="6.5" y="120.5" width="40" height="12" rx="2" fill="#fff" stroke="#2a2a2a" stroke-width="0.8"/><path d="M10 122.3 h34 M10 130.5 h34" stroke="#111" stroke-width="1.6" stroke-dasharray="6.5 3.2"/><path d="M9 128 h3 v2 h2" stroke="#111" fill="none" stroke-width="0.8"/><rect x="54.5" y="123.8" width="40" height="3.8" rx="1.5" fill="#fff" stroke="#3a3a3a" stroke-width="0.75"/><rect x="55" y="124.3" width="12" height="2.8" fill="#777"/><rect x="102.5" y="125.2" width="40.5" height="2.6" fill="#666"/><rect x="102.5" y="125" width="3" height="3" fill="#111"/><path d="M155.5 111.5 L190.5 111.5 L188 140.5 L151.5 135 Z" fill="#fff" stroke="#2a2a2a" stroke-width="0.8"/><rect x="153" y="132" width="12" height="1.5" fill="#222"/><rect x="198.5" y="123.7" width="40" height="4.5" rx="1.5" fill="#fff" stroke="#3a3a3a" stroke-width="0.75"/><rect x="198.5" y="126" width="2" height="2" fill="#111"/><rect x="246.5" y="120.8" width="40" height="9.2" fill="#fff" stroke="#2a2a2a" stroke-width="0.8"/><rect x="247" y="128" width="5" height="2" fill="#111"/><rect x="294.5" y="121.8" width="39.5" height="7.5" rx="1.5" fill="#fff" stroke="#2a2a2a" stroke-width="0.75"/><rect x="312" y="125" width="1.2" height="1.2" fill="#222"/><rect x="300" y="124" width="1" height="1" fill="#222"/><rect x="342.5" y="122.3" width="40" height="6.7" rx="2" fill="#fff" stroke="#2a2a2a" stroke-width="0.75"/><rect x="343" y="127" width="2" height="1.5" fill="#111"/><rect x="390.5" y="122.3" width="40" height="6.5" rx="2" fill="#fff" stroke="#2a2a2a" stroke-width="0.75"/><path d="M394 125.5 h30" stroke="#333" stroke-dasharray="2 3" stroke-width="1.5"/><rect x="425" y="123" width="3" height="4" fill="#222"/><path d="M438.5 126 L477 120 L479 121.5 L479 130.5 L438.5 131 Z" fill="#fff" stroke="#2a2a2a" stroke-width="0.75"/><rect x="439" y="129" width="8" height="1.4" fill="#111"/><rect x="486.5" y="121.8" width="40" height="8" rx="1" fill="#fff" stroke="#2a2a2a" stroke-width="0.75"/><rect x="487" y="128" width="3" height="2" fill="#111"/><rect x="505" y="128" width="2" height="1.5" fill="#111"/><rect x="523" y="128" width="3" height="2" fill="#111"/><rect x="535" y="125.3" width="40" height="2.2" fill="#555"/><rect x="585.5" y="124.3" width="37.5" height="3.6" fill="#fff" stroke="#3a3a3a" stroke-width="0.75"/><rect x="583" y="124.5" width="3" height="3.2" fill="#fff" stroke="#111" stroke-width="0.8"/><rect x="631.5" y="117.5" width="39" height="16.5" rx="2.5" fill="#fff" stroke="#3a3a3a" stroke-width="0.8"/><rect x="633" y="131" width="10" height="1.3" fill="#222"/><path d="M678.5 124 h19 v1.3 h21 v3 h-40 z" fill="#fff" stroke="#2a2a2a" stroke-width="0.75"/><path d="M680 125.5 h17" stroke="#222" stroke-width="1.2" stroke-dasharray="2 1.5"/><path d="M726.5 124 h21 v0.8 h19 v3.6 h-40 z" fill="#fff" stroke="#2a2a2a" stroke-width="0.75"/><path d="M728 125.6 h36" stroke="#222" stroke-width="1.1" stroke-dasharray="1.5 1.5"/><path d="M774.5 124 h21 v1 h19.5 v3.2 h-40.5 z" fill="#fff" stroke="#2a2a2a" stroke-width="0.75"/><path d="M776 125.6 h37" stroke="#2a2a2a" stroke-width="0.8" stroke-dasharray="1.2 1.8"/><rect x="824.5" y="111.5" width="36" height="30" fill="#fff" stroke="#2a2a2a" stroke-width="0.75"/><rect x="827" y="117" width="10" height="1" fill="#222"/><circle cx="833" cy="123" r="1" fill="#222"/><circle cx="843" cy="123" r="1" fill="#222"/><circle cx="835" cy="126" r="1" fill="#222"/><circle cx="841" cy="126" r="1" fill="#222"/><circle cx="835" cy="129" r="1" fill="#222"/><circle cx="841" cy="129" r="1" fill="#222"/><circle cx="838" cy="131" r="1" fill="#222"/><circle cx="833" cy="127" r="1" fill="#222"/><circle cx="843" cy="127" r="1" fill="#222"/><circle cx="838" cy="134" r="1" fill="#222"/><circle cx="836" cy="132" r="1" fill="#222"/><circle cx="840" cy="132" r="1" fill="#222"/><circle cx="838" cy="128" r="1" fill="#222"/><circle cx="829" cy="121" r="0.9" fill="#222"/><circle cx="846" cy="121" r="0.9" fill="#222"/><path d="M871.5 119.5 L904.5 120 L909.5 126 L907 131 L877 133 Z" fill="#fff" stroke="#2a2a2a" stroke-width="0.75"/><rect x="874" y="121" width="10" height="1.2" fill="#222"/><circle cx="904" cy="129" r="1.3" fill="#222"/><path d="M919.5 124 h39 l-3 4 h-34 z" fill="#fff" stroke="#2a2a2a" stroke-width="0.75"/><rect x="920" y="124" width="4" height="1.6" fill="#111"/><rect x="627.2" y="95.3" width="46.5" height="48.6" fill="none" stroke="#c020c8" stroke-width="1.8"/></svg>
<div class="cl" style="left:4px"><b>0</b><i>|</i>4</div>
<div class="cl" style="left:52px"><b>0</b><i>|</i>2</div>
<div class="cl" style="left:100px"><b>0</b><i>|</i>1</div>
<div class="cl" style="left:148px"><b>0</b><i>|</i>2</div>
<div class="cl" style="left:196px"><b>0</b><i>|</i>1</div>
<div class="cl" style="left:244px"><b>0</b><i>|</i>2</div>
<div class="cl" style="left:292px"><b>0</b><i>|</i>1</div>
<div class="cl" style="left:340px"><b>0</b><i>|</i>1</div>
<div class="cl" style="left:388px"><b>0</b><i>|</i>1</div>
<div class="cl" style="left:436px"><b>0</b><i>|</i>2</div>
<div class="cl" style="left:484px"><b>0</b><i>|</i>1</div>
<div class="cl" style="left:532px"><b>0</b><i>|</i>1</div>
<div class="cl" style="left:580px"><b>0</b><i>|</i>2</div>
<div class="cl" style="left:628px"><b>0</b><i>|</i>8</div>
<div class="cl" style="left:676px"><b>0</b><i>|</i>0</div>
<div class="cl" style="left:724px"><b>0</b><i>|</i>2</div>
<div class="cl" style="left:772px"><b>0</b><i>|</i>2</div>
<div class="cl" style="left:820px"><b>0</b><i>|</i>1</div>
<div class="cl" style="left:868px"><b>0</b><i>|</i>1</div>
<div class="cl" style="left:916px"><b>0</b><i>|</i>1</div>
</div>
<div id="nvh" class="a"><div class="a" style="left:4px;top:5.5px;font-size:8px;color:#4a4e78">Nesting explorer</div></div>
<div id="nv" class="a"></div>
<svg class="a" style="left:200px;top:172px" width="40" height="16" viewBox="200 172 40 16"><path d="M206.8 180.8 h5.2 l-2.6 3z" fill="#1a2030"/><path d="M218.5 178.5 h3 v4 h-3z M217.5 182.5 h5 M220 182.5 v2.5" stroke="#1a2030" stroke-width="1" fill="#8090a8"/><path d="M228.3 179 l5 5 M233.3 179 l-5 5" stroke="#1a2030" stroke-width="1.4"/></svg>
<div id="tree"><svg class="a" style="left:0;top:0" width="239" height="400" viewBox="0 0 239 400"><g stroke="#b4b4b4" stroke-width="1" stroke-dasharray="1 1" fill="none"><line x1="9.5" y1="200" x2="9.5" y2="377"/><line x1="12" y1="197.5" x2="16" y2="197.5"/><line x1="24" y1="209.5" x2="29" y2="209.5"/><line x1="24" y1="221.5" x2="29" y2="221.5"/><line x1="34.5" y1="233.5" x2="42" y2="233.5"/><line x1="34.5" y1="245.5" x2="42" y2="245.5"/><line x1="34.5" y1="257.5" x2="42" y2="257.5"/><line x1="34.5" y1="269.5" x2="42" y2="269.5"/><line x1="34.5" y1="281.5" x2="42" y2="281.5"/><line x1="34.5" y1="293.5" x2="42" y2="293.5"/><line x1="34.5" y1="305.5" x2="42" y2="305.5"/><line x1="34.5" y1="317.5" x2="42" y2="317.5"/><line x1="12" y1="329.5" x2="16" y2="329.5"/><line x1="24" y1="341.5" x2="29" y2="341.5"/><line x1="12" y1="353.5" x2="16" y2="353.5"/><line x1="24" y1="365.5" x2="29" y2="365.5"/><line x1="12" y1="377.5" x2="16" y2="377.5"/><line x1="24" y1="389.5" x2="29" y2="389.5"/><line x1="21.5" y1="201" x2="21.5" y2="218"/><line x1="21.5" y1="333" x2="21.5" y2="338"/><line x1="21.5" y1="357" x2="21.5" y2="362"/><line x1="21.5" y1="381" x2="21.5" y2="386"/><line x1="34.5" y1="226" x2="34.5" y2="317"/></g><rect x="6.5" y="194.5" width="6" height="6" fill="#f4f4f4" stroke="#b0b0b0"/><line x1="8" y1="197.5" x2="11" y2="197.5" stroke="#606060"/><path d="M16 193 h4 l1 1 h5 v2 h-9 z" fill="#e8c860"/><path d="M16 194 v7 h9 l2 -5 h-9 z" fill="#f4d070" stroke="#b08830" stroke-width="0.6"/><rect x="18.5" y="206.5" width="6" height="6" fill="#f4f4f4" stroke="#b8b8b8"/><line x1="20" y1="209.5" x2="23" y2="209.5" stroke="#707070"/><line x1="21.5" y1="208" x2="21.5" y2="211" stroke="#707070"/><rect x="29" y="205" width="10" height="7" fill="#7a1a8a"/><path d="M30 211 l3 -4 l2 2 l3 -4" stroke="#c060d0" stroke-width="0.8" fill="none"/><rect x="18.5" y="218.5" width="6" height="6" fill="#f4f4f4" stroke="#b8b8b8"/><line x1="20" y1="221.5" x2="23" y2="221.5" stroke="#707070"/><rect x="29" y="217" width="10" height="7" fill="#7a1a8a"/><path d="M30 223 l3 -4 l2 2 l3 -4" stroke="#c060d0" stroke-width="0.8" fill="none"/><path d="M43 233 l3 3.5 l6 -8" stroke="#48c448" stroke-width="2.3" fill="none" stroke-linecap="round"/><path d="M43 245 l3 3.5 l6 -8" stroke="#48c448" stroke-width="2.3" fill="none" stroke-linecap="round"/><path d="M43 257 l3 3.5 l6 -8" stroke="#48c448" stroke-width="2.3" fill="none" stroke-linecap="round"/><path d="M43 269 l3 3.5 l6 -8" stroke="#48c448" stroke-width="2.3" fill="none" stroke-linecap="round"/><path d="M43 281 l3 3.5 l6 -8" stroke="#48c448" stroke-width="2.3" fill="none" stroke-linecap="round"/><path d="M43 293 l3 3.5 l6 -8" stroke="#48c448" stroke-width="2.3" fill="none" stroke-linecap="round"/><path d="M43 305 l3 3.5 l6 -8" stroke="#48c448" stroke-width="2.3" fill="none" stroke-linecap="round"/><path d="M43 317 l3 3.5 l6 -8" stroke="#48c448" stroke-width="2.3" fill="none" stroke-linecap="round"/><rect x="6.5" y="326.5" width="6" height="6" fill="#f4f4f4" stroke="#b0b0b0"/><line x1="8" y1="329.5" x2="11" y2="329.5" stroke="#606060"/><path d="M16.5 324.5 h4 l1 1 h4.5 v8 h-9.5 z" fill="#d8a838" stroke="#a07820" stroke-width="0.6"/><rect x="17" y="327" width="8.5" height="5.5" fill="#f0c860"/><rect x="18.5" y="338.5" width="6" height="6" fill="#f4f4f4" stroke="#b8b8b8"/><line x1="20" y1="341.5" x2="23" y2="341.5" stroke="#707070"/><line x1="21.5" y1="340" x2="21.5" y2="343" stroke="#707070"/><rect x="29" y="337" width="10" height="7" fill="#7a1a8a"/><path d="M30 343 l3 -4 l2 2 l3 -4" stroke="#c060d0" stroke-width="0.8" fill="none"/><rect x="6.5" y="350.5" width="6" height="6" fill="#f4f4f4" stroke="#b0b0b0"/><line x1="8" y1="353.5" x2="11" y2="353.5" stroke="#606060"/><path d="M16.5 348.5 h4 l1 1 h4.5 v8 h-9.5 z" fill="#d8a838" stroke="#a07820" stroke-width="0.6"/><rect x="17" y="351" width="8.5" height="5.5" fill="#f0c860"/><rect x="18.5" y="362.5" width="6" height="6" fill="#f4f4f4" stroke="#b8b8b8"/><line x1="20" y1="365.5" x2="23" y2="365.5" stroke="#707070"/><line x1="21.5" y1="364" x2="21.5" y2="367" stroke="#707070"/><rect x="29" y="361" width="10" height="7" fill="#7a1a8a"/><path d="M30 367 l3 -4 l2 2 l3 -4" stroke="#c060d0" stroke-width="0.8" fill="none"/><rect x="6.5" y="374.5" width="6" height="6" fill="#f4f4f4" stroke="#b0b0b0"/><line x1="8" y1="377.5" x2="11" y2="377.5" stroke="#606060"/><path d="M16.5 372.5 h4 l1 1 h4.5 v8 h-9.5 z" fill="#d8a838" stroke="#a07820" stroke-width="0.6"/><rect x="17" y="375" width="8.5" height="5.5" fill="#f0c860"/><rect x="18.5" y="386.5" width="6" height="6" fill="#f4f4f4" stroke="#b8b8b8"/><line x1="20" y1="389.5" x2="23" y2="389.5" stroke="#707070"/><line x1="21.5" y1="388" x2="21.5" y2="391" stroke="#707070"/><rect x="29" y="385" width="10" height="7" fill="#7a1a8a"/><path d="M30 391 l3 -4 l2 2 l3 -4" stroke="#c060d0" stroke-width="0.8" fill="none"/></svg>
<div class="a" style="left:54px;top:299px;width:49px;height:12px;background:#ececf0"></div>
<div class="tr tb" style="left:30px;top:191px;transform:scaleX(1.006)">LVD Impuls 6530 - 4000W-S355 JR-4.0000 *</div>
<div class="tr tn" style="left:42.5px;top:203px;transform:scaleX(0.834)">4600 x 1500 x 4 x 50A 4600.000x1500.000</div>
<div class="tr tn" style="left:42.5px;top:215px;transform:scaleX(0.829)">4600 x 1500 x 4 x 50A 4600.000x1500.000 *</div>
<div class="tr tn" style="left:55px;top:227px;transform:scaleX(0.855)">00AA-1367, 4</div>
<div class="tr tn" style="left:55px;top:239px;transform:scaleX(0.840)">00CC-4246, 2</div>
<div class="tr tn" style="left:55px;top:251px;transform:scaleX(0.840)">00CC-4245, 1</div>
<div class="tr tn" style="left:55px;top:263px;transform:scaleX(0.832)">B 00AC-120, 1</div>
<div class="tr tn" style="left:55px;top:275px;transform:scaleX(0.850)">F00AC-119, 1</div>
<div class="tr tn" style="left:55px;top:287px;transform:scaleX(0.859)">B 00AC-118, 2</div>
<div class="tr tn" style="left:55px;top:299px;transform:scaleX(0.861)">B00AC-117, 8</div>
<div class="tr tn" style="left:55px;top:311px;transform:scaleX(0.850)">F00AC-113B, 2</div>
<div class="tr tb" style="left:30px;top:323px;transform:scaleX(1.009)">LVD Impuls 6530 - 4000W-S355 JR-6.0000</div>
<div class="tr tn" style="left:42.5px;top:335px;transform:scaleX(0.834)">4600 x 1500 x 6 x 50A 4500.000x1500.000</div>
<div class="tr tb" style="left:30px;top:347px;transform:scaleX(1.009)">LVD Impuls 6530 - 4000W-S355 JR-8.0000</div>
<div class="tr tn" style="left:42.5px;top:359px;transform:scaleX(0.846)">3000 x 1500 x 8mm 50A 3000.000x1500.000</div>
<div class="tr tb" style="left:30px;top:371px;transform:scaleX(0.958)">SAF HPC-S355 JR-6.0000</div>
<div class="tr tn" style="left:42.5px;top:383px;transform:scaleX(0.845)">500 x 500 x 6mm 50A 500.000x500.000</div></div>
<div class="a" style="left:242px;top:175px;width:1036px;height:1px;background:#3a3870"></div><div class="a" style="left:242px;top:175px;width:1px;height:545px;background:#7a74b4"></div>
<div class="a" style="left:1278px;top:176px;width:2px;height:544px;background:linear-gradient(90deg,#c8cce0,#f6f8fc)"></div>
<div id="canvas" class="a"><svg width="1035" height="544" viewBox="243 176 1035 544" style="position:absolute;left:0;top:0">
<g fill="none" shape-rendering="geometricPrecision">
<line x1="242" y1="202.5" x2="1278" y2="202.5" stroke="#8a86e0" stroke-width="1.3"/>
<line x1="242" y1="205.8" x2="1278" y2="205.8" stroke="#6e68cc" stroke-width="1.3"/>
<g stroke="#d222f2" stroke-width="1.7">
<rect x="120" y="225.7" width="234" height="96" rx="5"/>
<rect x="354" y="225.7" width="234.6" height="96" rx="5"/>
<rect x="588.6" y="225.7" width="235.4" height="96" rx="5"/>
<rect x="824" y="225.7" width="236" height="96" rx="5"/>
</g>
<g fill="#e414f4" stroke="#e414f4" stroke-width="2" font-family="Liberation Sans" font-weight="bold" font-size="10">
<text x="362.5" y="310.8" textLength="68" lengthAdjust="spacingAndGlyphs">00BAC-02-STANDARD</text>
<text x="598.5" y="310.8" textLength="68" lengthAdjust="spacingAndGlyphs">00BAC-02-STANDARD</text>
<text x="833.5" y="310.8" textLength="68" lengthAdjust="spacingAndGlyphs">00BAC-02-STANDARD</text>
<rect x="362" y="309.5" width="69" height="1.5" stroke="none"/><rect x="598" y="309.5" width="69" height="1.5" stroke="none"/><rect x="833" y="309.5" width="69" height="1.5" stroke="none"/>
</g>
<g stroke="#c8644e" stroke-width="1.1">
<rect x="1067.8" y="209.5" width="260" height="112.5" rx="6" stroke="#b46a98"/>
<path d="M1106.0 216.8 H1155.5 Q1157.0 216.8 1158.0 218.3 L1159.0 221.05 L1158.0 223.8 Q1157.0 225.3 1155.5 225.3 H1106.0 Q1104.5 225.3 1103.5 223.8 L1102.5 221.05 L1103.5 218.3 Q1104.5 216.8 1106.0 216.8 Z" stroke="#c86474"/>
<path d="M1184.0 216.8 H1234.0 Q1235.5 216.8 1236.5 218.3 L1237.5 221.05 L1236.5 223.8 Q1235.5 225.3 1234.0 225.3 H1184.0 Q1182.5 225.3 1181.5 223.8 L1180.5 221.05 L1181.5 218.3 Q1182.5 216.8 1184.0 216.8 Z" stroke="#c86474"/>
<path d="M1106.0 306.2 H1155.5 Q1157.0 306.2 1158.0 307.7 L1159.0 310.45 L1158.0 313.2 Q1157.0 314.7 1155.5 314.7 H1106.0 Q1104.5 314.7 1103.5 313.2 L1102.5 310.45 L1103.5 307.7 Q1104.5 306.2 1106.0 306.2 Z" stroke="#c86474"/>
<path d="M1184.0 306.2 H1234.0 Q1235.5 306.2 1236.5 307.7 L1237.5 310.45 L1236.5 313.2 Q1235.5 314.7 1234.0 314.7 H1184.0 Q1182.5 314.7 1181.5 313.2 L1180.5 310.45 L1181.5 307.7 Q1182.5 306.2 1184.0 306.2 Z" stroke="#c86474"/>
</g>
<text x="1077" y="298" textLength="36" lengthAdjust="spacingAndGlyphs" font-family="Liberation Mono" font-size="8.5" fill="#b4b2cc" stroke="#b4b2cc" stroke-width="0.3">00AA-1367_</text><rect x="1077" y="297.6" width="38" height="0.9" fill="#a8a6c0"/>
<!-- long rect -->
<path d="M242 330.5 H687 V350 H242" stroke="#7a76c8" stroke-width="1.1"/>
<line x1="687" y1="330.5" x2="687" y2="350" stroke="#c8644e" stroke-width="1.3"/>
<!-- lower rect -->
<g stroke="#d07a70" stroke-width="1">
<path d="M242 362.5 H334.4 A10.3 10.3 0 0 0 355 362.5 H569.7 A10.3 10.3 0 0 0 590.3 362.5 H678.5"/>
<path d="M242 688.5 H334.4 A10.3 10.3 0 0 1 355 688.5 H569.7 A10.3 10.3 0 0 1 590.3 688.5 H678.5"/>
<path d="M242 525.5 H334.4 M355 525.5 H569.7 M590.3 525.5 H678.5" stroke="#dc8a80"/>
<circle cx="344.7" cy="525.5" r="10.3"/>
<circle cx="580" cy="525.5" r="10.3"/>
<line x1="678.5" y1="362" x2="678.5" y2="689" stroke="#a86a80"/>
<line x1="242" y1="696.5" x2="1278" y2="696.5" stroke="#d8aaa0"/>
</g>
<!-- big shape -->
<path d="M693.5 562 Q693.5 566 689 568 Q685.5 570 685.5 574 V656.5 H718 L711.6 688.5 H1278" stroke="#c88078" stroke-width="1"/>
<path d="M693.5 562 V358 A28 28 0 0 1 722 330.5 H1278" stroke="#9a7ab4" stroke-width="1"/>
<g stroke="#6a2888" stroke-width="1">
<circle cx="725.5" cy="376" r="4.5"/><circle cx="829" cy="376" r="4.5"/>
<circle cx="725.5" cy="454.6" r="4.5"/><circle cx="829" cy="454.6" r="4.5"/>
<circle cx="725.5" cy="532.3" r="4.5"/><circle cx="829" cy="532.3" r="4.5"/>
</g>
<circle cx="755.5" cy="457.3" r="4.3" stroke="#d8d8ec" stroke-width="1.1"/>
<g stroke="#d0684e" stroke-width="1.1">
<circle cx="745" cy="589" r="6.8"/><circle cx="823" cy="589" r="6.8"/>
<circle cx="745" cy="637" r="6.8"/><circle cx="781.8" cy="637" r="9.8"/><circle cx="823" cy="637" r="6.8"/>
<circle cx="914.5" cy="604.8" r="9.6"/>
</g>
<g stroke="#8a4a6a" stroke-width="1">
<circle cx="755" cy="675" r="2.6"/><circle cx="793" cy="675" r="2.6"/><circle cx="832" cy="675" r="2.6"/>
</g>
<text x="695.5" y="619.3" textLength="73" lengthAdjust="spacingAndGlyphs" font-family="Liberation Mono" font-size="8" fill="#b8b6d0" stroke="#b8b6d0" stroke-width="0.3">B 00AC-120_STANDARD</text><rect x="695.5" y="619" width="73.5" height="0.9" fill="#a8a6c0"/>
</g></svg></div>
</body></html>
